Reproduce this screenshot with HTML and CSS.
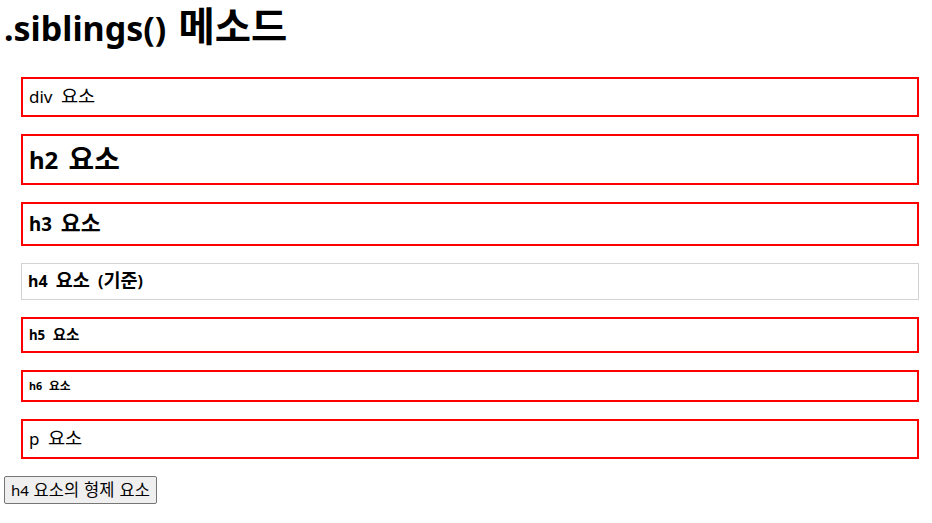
FILE: index.html
```html
<!DOCTYPE html>
<html lang="ko">
<head>
    <meta charset="UTF-8">
    <meta name="viewport" content="width=device-width, initial-scale=1.0">
    <title>.siblings() 메소드</title>
    <link rel="stylesheet" href="styles.css">
</head>
<body>

    <h1>.siblings() <span class="ko">메소드</span></h1>

    <!-- h4 요소의 형제 요소에 빨간 테두리 -->
    <div class="wrapper">
        <div class="item sibling">div <span class="ko">요소</span></div>
        <h2 class="item sibling">h2 <span class="ko">요소</span></h2>
        <h3 class="item sibling">h3 <span class="ko">요소</span></h3>
        <h4 class="item">h4 <span class="ko">요소</span> (<span class="ko">기준</span>)</h4>
        <h5 class="item sibling">h5 <span class="ko">요소</span></h5>
        <h6 class="item sibling">h6 <span class="ko">요소</span></h6>
        <p class="item sibling">p <span class="ko">요소</span></p>
    </div>

    <button class="run-button">h4 <span class="ko">요소의 형제 요소</span></button>

</body>
</html>
```

FILE: styles.css
```css
body {
    font-family: "Noto Sans", "Noto Sans CJK KR", sans-serif;
    color: #000;
    margin: 0;
    padding: 4px;
    word-spacing: 0.25em;
}

/* 한글 글자를 조금 크게 */
.ko {
    font-size: 1.1em;
    line-height: 1;
}

h1 {
    font-size: 34px;
    line-height: 48px;
    margin: 0 0 25px 0;
    word-spacing: 0.1em;
}

h1 .ko,
h2 .ko,
h3 .ko,
h4 .ko {
    font-size: 1.16em;
}

.wrapper {
    display: flex;
    flex-direction: column;
    gap: 17px;
    margin: 0 9px 17px 17px;
}

.item {
    margin: 0;
    padding: 6px 6px;
    border: 1px solid lightgray;
}

/* 형제 요소 표시 */
.sibling {
    border: 2px solid red;
}

div.item { font-size: 17px; line-height: 24px; }
h2.item  { font-size: 24px; line-height: 35px; }
h3.item  { font-size: 18.72px; line-height: 28px; }
h4.item  { font-size: 16px; line-height: 23px; }
h5.item  { font-size: 13.28px; line-height: 20px; }
h6.item  { font-size: 10.72px; line-height: 16px; }
p.item   { font-size: 17px; line-height: 24px; }

.run-button {
    font-family: "Noto Sans", "Noto Sans CJK KR", sans-serif;
    font-size: 15px;
    line-height: 20px;
    word-spacing: 0.05em;
    padding: 3px 6px;
    background-color: #efefef;
    border: 1px solid #767676;
    border-radius: 2px;
    color: #000;
}
```
